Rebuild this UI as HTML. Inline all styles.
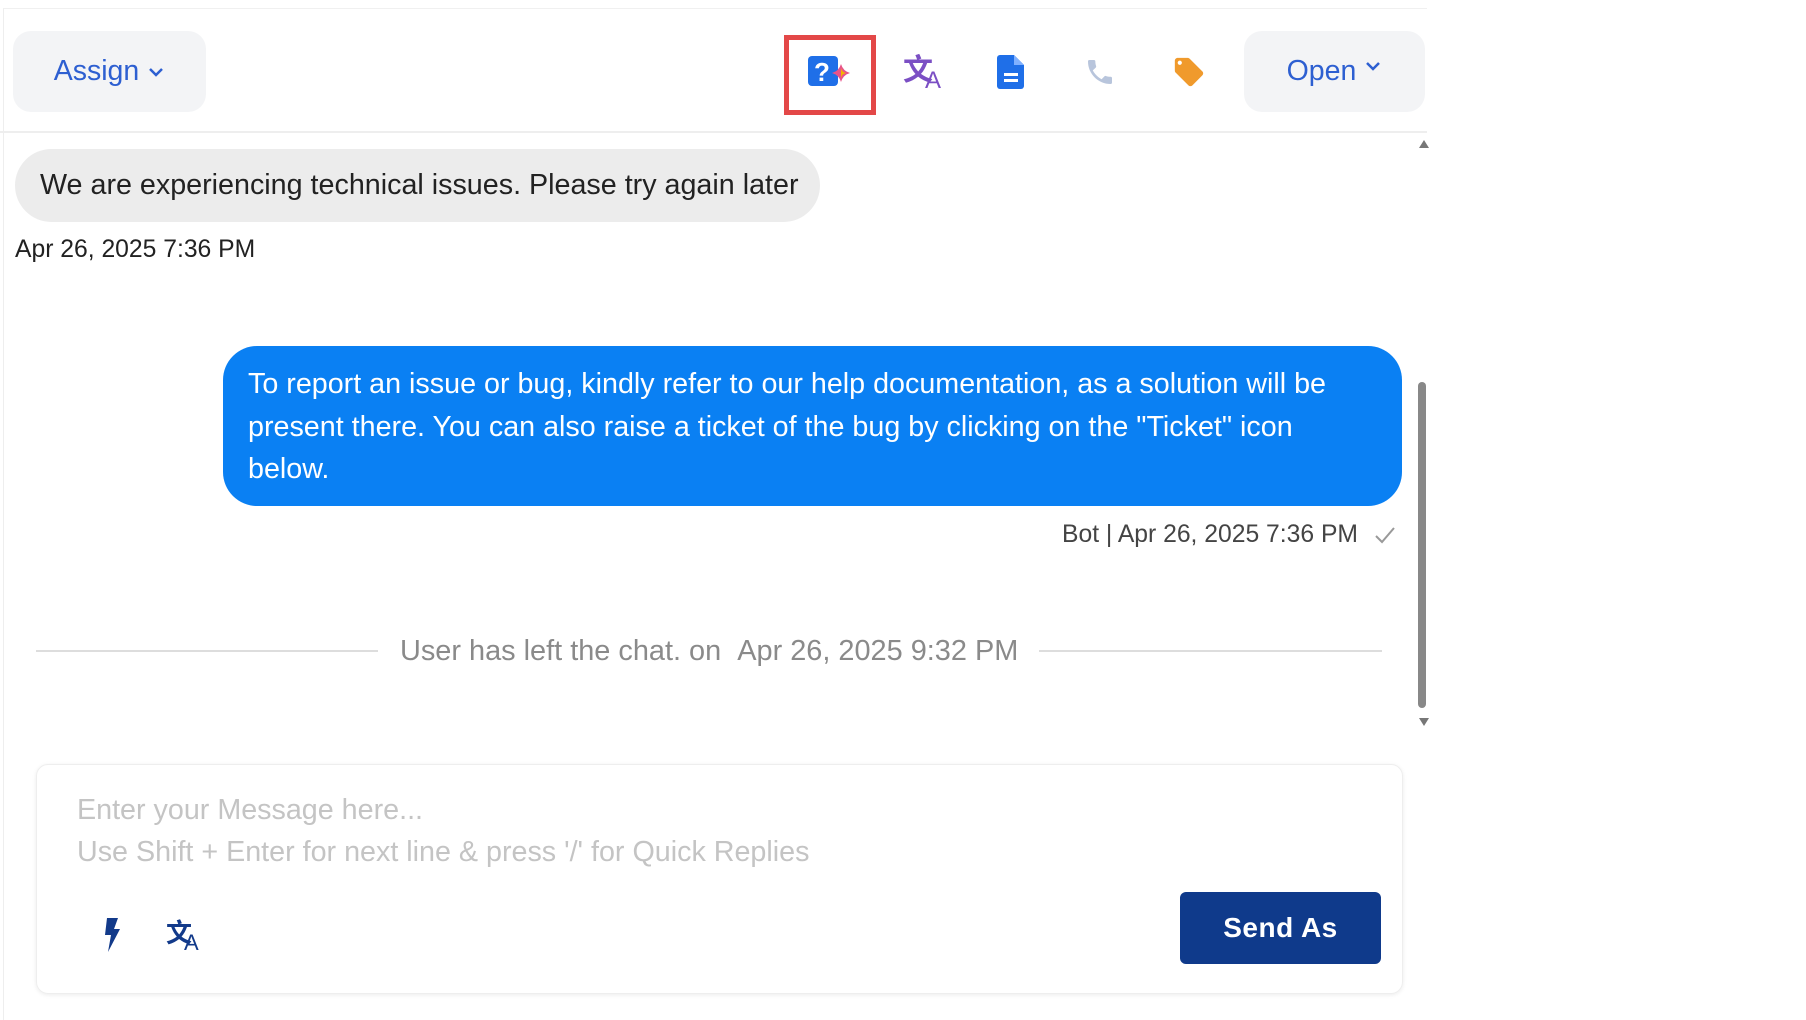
<!DOCTYPE html>
<html><head><meta charset="utf-8"><style>
*{margin:0;padding:0;box-sizing:border-box}
body{width:1806px;height:1020px;background:#fff;font-family:"Liberation Sans",sans-serif;position:relative;overflow:hidden}
.abs{position:absolute}
.panel{left:3px;top:8px;width:1424px;height:1012px;border-left:1px solid #eee;border-top:1px solid #f0f0f0}
.pill{background:#f3f4f6;border-radius:18px;color:#2d5fd1;font-size:28.5px;display:flex;align-items:center;justify-content:center;gap:8px}
.t{white-space:nowrap}
</style></head><body>
<div class="abs panel"></div>
<div class="abs pill" style="left:13px;top:31px;width:193px;height:81px">Assign <svg width="18" height="12" viewBox="0 0 18 12"><path d="M3 3l6 6 6-6" stroke="#2d5fd1" stroke-width="2.5" fill="none"/></svg></div>
<div class="abs pill" style="left:1244px;top:31px;width:181px;height:81px">Open <svg width="18" height="14" viewBox="0 0 18 14" style="margin-top:-10px"><path d="M3 3l6 6 6-6" stroke="#2d5fd1" stroke-width="2.5" fill="none"/></svg></div>
<div class="abs" style="left:0;top:131px;width:1427px;height:2px;background:#eee"></div>
<div class="abs" style="left:784px;top:35px;width:92px;height:80px;border:5px solid #e34848"></div>
<svg class="abs" style="left:808px;top:56px" width="48" height="34" viewBox="0 0 48 34"><rect x="0" y="0" width="30" height="30" rx="4" fill="#1f6fe8"/><text x="6" y="25" font-size="26" font-weight="bold" fill="#fff" font-family="Liberation Sans">?</text><path d="M33 8 Q35 15 42 17 Q35 19 33 26 Q31 19 24 17 Q31 15 33 8Z" fill="#e8538a"/><path d="M33 12 Q34 16 38 17 Q34 18 33 22Z" fill="#f4b400"/></svg>
<div class="abs t" style="left:903px;top:52px;color:#7b4fc4;font-size:30px;font-weight:bold;font-family:'Noto Sans CJK SC',sans-serif;line-height:30px">文<span style="font-family:'Liberation Sans';font-size:24px;font-weight:normal;position:relative;top:8px;left:-8px">A</span></div>
<svg class="abs" style="left:997px;top:55px" width="28" height="34" viewBox="0 0 28 34"><path d="M3 0h14l10 10v21a3 3 0 0 1-3 3H3a3 3 0 0 1-3-3V3a3 3 0 0 1 3-3z" fill="#1f6fe8"/><path d="M17 0v10h10" fill="#7fb0ff"/><rect x="7" y="18" width="14" height="3" fill="#fff"/><rect x="7" y="24" width="14" height="3" fill="#fff"/></svg>
<svg class="abs" style="left:1084px;top:56px" width="32" height="32" viewBox="0 0 24 24"><path d="M6.6 10.8c1.4 2.8 3.8 5.1 6.6 6.6l2.2-2.2c.3-.3.7-.4 1-.2 1.1.4 2.3.6 3.6.6.6 0 1 .4 1 1V20c0 .6-.4 1-1 1C10.6 21 3 13.4 3 4c0-.6.4-1 1-1h3.5c.6 0 1 .4 1 1 0 1.3.2 2.5.6 3.6.1.3 0 .7-.2 1z" fill="#b8c5dc"/></svg>
<svg class="abs" style="left:1172px;top:55px" width="34" height="34" viewBox="0 0 24 24"><path d="M21.4 11.6l-9-9C12 2.2 11.6 2 11 2H4c-1.1 0-2 .9-2 2v7c0 .6.2 1.1.6 1.4l9 9c.4.4.9.6 1.4.6s1-.2 1.4-.6l7-7c.4-.4.6-.9.6-1.4s-.2-1.1-.6-1.4zM5.5 7C4.7 7 4 6.3 4 5.5S4.7 4 5.5 4 7 4.7 7 5.5 6.3 7 5.5 7z" fill="#f09a2c"/></svg>
<div class="abs t" style="left:15px;top:149px;width:805px;height:73px;background:#ececec;border-radius:37px;font-size:28.7px;color:#222;line-height:73px;padding-left:25px">We are experiencing technical issues. Please try again later</div>
<div class="abs t" style="left:15px;top:236px;font-size:24.7px;color:#222;line-height:28px">Apr 26, 2025 7:36 PM</div>
<div class="abs" style="left:223px;top:346px;width:1179px;height:160px;background:#0a80f3;border-radius:34px;color:#fff;font-size:28.7px;line-height:42.5px;padding:17px 25px 0 25px">To report an issue or bug, kindly refer to our help documentation, as a solution will be present there. You can also raise a ticket of the bug by clicking on the "Ticket" icon below.</div>
<div class="abs t" style="right:448px;top:521px;font-size:24.7px;color:#444;line-height:28px">Bot | Apr 26, 2025 7:36 PM</div>
<svg class="abs" style="left:1373px;top:524px" width="24" height="22" viewBox="0 0 24 22"><path d="M3 12l6 6L21 4" stroke="#999" stroke-width="2" fill="none"/></svg>
<div class="abs" style="left:36px;top:650px;width:342px;height:2px;background:#ddd"></div>
<div class="abs" style="left:1039px;top:650px;width:343px;height:2px;background:#ddd"></div>
<div class="abs t" style="left:400px;top:635px;font-size:28.9px;color:#8a8a8a;line-height:32px">User has left the chat. on &nbsp;Apr 26, 2025 9:32 PM</div>
<div class="abs" style="left:1419px;top:140px;width:0;height:0;border-left:5px solid transparent;border-right:5px solid transparent;border-bottom:8px solid #777"></div>
<div class="abs" style="left:1418px;top:382px;width:8px;height:326px;background:#888;border-radius:4px"></div>
<div class="abs" style="left:1419px;top:718px;width:0;height:0;border-left:5px solid transparent;border-right:5px solid transparent;border-top:8px solid #777"></div>
<div class="abs" style="left:36px;top:764px;width:1367px;height:230px;border:1px solid #eee;border-radius:12px;box-shadow:0 1px 4px rgba(0,0,0,.08)"></div>
<div class="abs t" style="left:77px;top:789px;font-size:28.7px;color:#c4c4c4;line-height:42px">Enter your Message here...<br>Use Shift + Enter for next line &amp; press '/' for Quick Replies</div>
<svg class="abs" style="left:102px;top:918px" width="20" height="34" viewBox="0 0 20 34"><path d="M5 0h11l-4 11h6L6 34l3-17H3z" fill="#123a8a"/></svg>
<div class="abs t" style="left:166px;top:918px;color:#123a8a;font-size:26px;font-weight:bold;font-family:'Noto Sans CJK SC',sans-serif;line-height:28px">文<span style="font-family:'Liberation Sans';font-size:22px;font-weight:normal;position:relative;top:8px;left:-8px">A</span></div>
<div class="abs" style="left:1180px;top:892px;width:201px;height:72px;background:#0f3a8b;border-radius:6px;color:#fff;font-size:28px;font-weight:bold;line-height:72px;text-align:center;letter-spacing:0.5px">Send As</div>
</body></html>
